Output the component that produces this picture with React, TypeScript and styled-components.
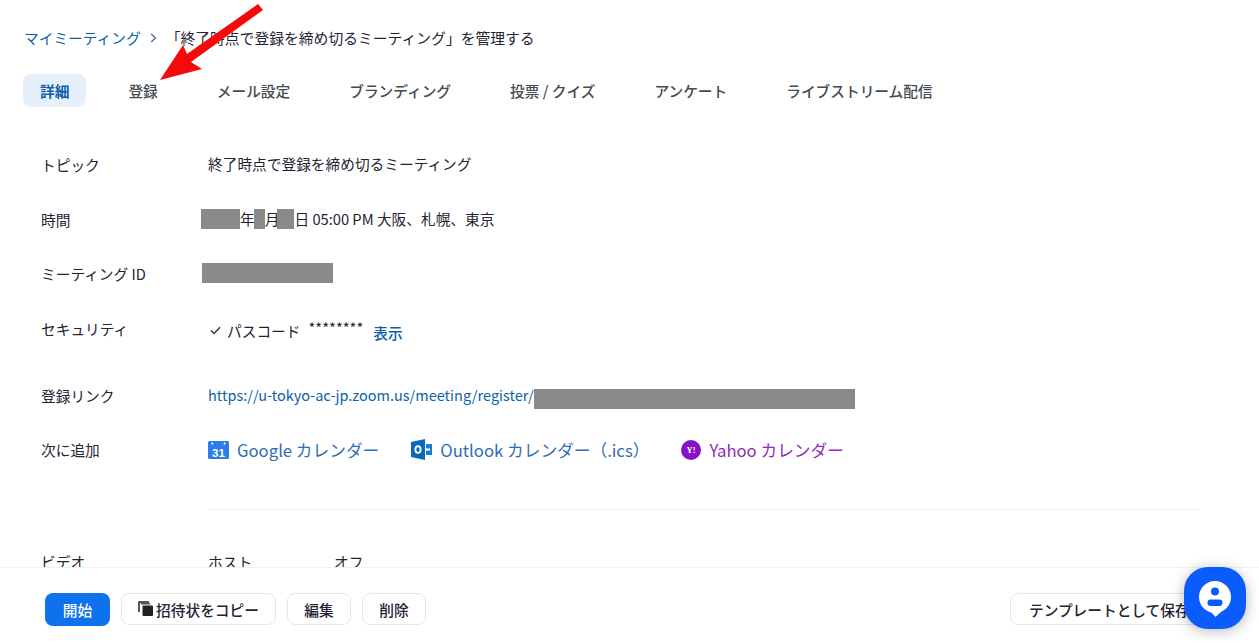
import React from 'react'
import styled, { createGlobalStyle } from 'styled-components'

const GlobalStyle = createGlobalStyle`
  html, body {
    margin: 0;
    padding: 0;
    background: #fff;
    overflow: hidden;
  }
  body {
    font-family: "Noto Sans CJK JP", "Noto Sans", sans-serif;
    color: #232333;
  }
`

const tabs = ['詳細', '登録', 'メール設定', 'ブランディング', '投票 / クイズ', 'アンケート', 'ライブストリーム配信']

const App: React.FC = () => {
  return (
    <Page>
      <GlobalStyle />
      <Content>
        <Breadcrumb>
          <CrumbLink>マイミーティング</CrumbLink>
          <CrumbSep>
            <svg width="7" height="10" viewBox="0 0 7 10">
              <path d="M1.2 1 L5.4 5 L1.2 9" fill="none" stroke="#3f6f9f" strokeWidth="1.3" />
            </svg>
          </CrumbSep>
          <CrumbTitle>「終了時点で登録を締め切るミーティング」を管理する</CrumbTitle>
        </Breadcrumb>
        <TabBar>
          {tabs.map((t, i) => (
            <Tab key={t} $active={i === 0}>{t}</Tab>
          ))}
        </TabBar>
        <Rows>
          <Row $h={55}>
            <Label>トピック</Label>
            <Value>終了時点で登録を締め切るミーティング</Value>
          </Row>
          <Row $h={55}>
            <Label>時間</Label>
            <DateValue>
              <Redact $w={39} />年<Redact $w={11} $nudge={-1} />月<Redact $w={17} $nudge={-2} />日 05:00 PM 大阪、札幌、東京
            </DateValue>
          </Row>
          <Row $h={54}>
            <Label>ミーティング ID</Label>
            <DateValue>
              <Redact $w={131} $nudge={1} />
            </DateValue>
          </Row>
          <Row $h={55} $after={12}>
            <Label>セキュリティ</Label>
            <SecurityValue>
              <Check width="11" height="9" viewBox="0 0 11 9">
                <path d="M1 4.5 L4 7.5 L10 1.2" fill="none" stroke="#333" strokeWidth="1.4" />
              </Check>
              パスコード<Stars>********</Stars><ShowLink>表示</ShowLink>
            </SecurityValue>
          </Row>
          <Row $h={55}>
            <Label>登録リンク</Label>
            <Value>
              <UrlLink>https://u-tokyo-ac-jp.zoom.us/meeting/register/</UrlLink>
              <Redact $w={321} $drop={4} />
            </Value>
          </Row>
          <Row $h={53}>
            <Label>次に追加</Label>
            <CalendarList>
              <CalendarLink>
                <svg width="21" height="20" viewBox="0 0 21 20">
                  <rect x="0" y="1" width="21" height="18" rx="1.5" fill="#2b7de9" />
                  <rect x="3.5" y="2.5" width="1.6" height="2" fill="#fff" />
                  <rect x="15.8" y="2.5" width="1.6" height="2" fill="#fff" />
                  <text x="10.5" y="16.5" textAnchor="middle" fontSize="11.5" fontWeight="700" fill="#fff" fontFamily="Liberation Sans, sans-serif">31</text>
                </svg>
                Google カレンダー
              </CalendarLink>
              <CalendarLink>
                <svg width="21" height="21" viewBox="0 0 21 21">
                  <path d="M0 3 L14 0 V21 L0 18 Z" fill="#0b68b8" />
                  <path d="M15 5 H21 V16 H15 V11.5 H19 V9.5 H15 Z" fill="#1a7ccc" />
                  <ellipse cx="7" cy="10.5" rx="2.6" ry="3.4" fill="none" stroke="#fff" strokeWidth="1.8" />
                </svg>
                Outlook カレンダー（.ics）
              </CalendarLink>
              <CalendarLink $purple>
                <svg width="20" height="20" viewBox="0 0 20 20">
                  <circle cx="10" cy="10" r="10" fill="#8a10c4" />
                  <text x="10" y="13" textAnchor="middle" fontSize="8.5" fontWeight="700" fill="#fff" fontFamily="Liberation Serif, serif">Y!</text>
                </svg>
                Yahoo カレンダー
              </CalendarLink>
            </CalendarList>
          </Row>
        </Rows>
        <Divider />
        <VideoRow>
          <Label>ビデオ</Label>
          <span>ホスト</span>
          <span>オフ</span>
        </VideoRow>
      </Content>
      <Footer>
        <PrimaryButton>開始</PrimaryButton>
        <CopyButton>
          <svg width="16" height="16" viewBox="0 0 16 16">
            <path d="M1 11 V1 H11" fill="none" stroke="#222" strokeWidth="1.5" />
            <path d="M2.8 2.8 H12" fill="none" stroke="#222" strokeWidth="1.2" />
            <rect x="4.5" y="4.5" width="10.5" height="10.5" rx="1" fill="#222" />
          </svg>
          招待状をコピー
        </CopyButton>
        <GhostButton>編集</GhostButton>
        <GhostButton>削除</GhostButton>
        <SaveButton>テンプレートとして保存</SaveButton>
      </Footer>
      <ChatBubble>
        <svg width="34" height="38" viewBox="0 0 34 38">
          <circle cx="17" cy="16" r="16" fill="#fff" />
          <path d="M12 30 L17.5 36 L26 28 Z" fill="#fff" />
          <circle cx="17" cy="10.5" r="4" fill="#0b5cff" />
          <rect x="9.5" y="18.5" width="15" height="6.5" rx="3.2" fill="#0b5cff" />
        </svg>
      </ChatBubble>
      <Arrow width="132" height="82" viewBox="0 0 132 82">
        <path d="M27 80 L50 45 L54 54 L125 4 L130 10 L58 62 L69 69 Z" fill="#f40a0a" />
      </Arrow>
    </Page>
  )
}

export default App

const Page = styled.div`
  position: relative;
  display: flex;
  flex-direction: column;
  width: 1259px;
  height: 643px;
  overflow: hidden;
  font-size: 14.7px;
  line-height: 20px;
`

const Content = styled.main`
  flex: 1;
  min-height: 0;
  overflow: hidden;
  padding: 28px 59px 0 23px;
`

const Breadcrumb = styled.nav`
  display: flex;
  align-items: center;
  height: 20px;
  padding-left: 1px;
  color: #232333;
`

const CrumbLink = styled.a`
  color: #0e5fa8;
`

const CrumbSep = styled.span`
  display: flex;
  width: 25px;
  padding-left: 9px;
  box-sizing: border-box;
`

const CrumbTitle = styled.span`
  font-size: 14.8px;
`

const TabBar = styled.div`
  display: flex;
  gap: 25px;
  margin-top: 26px;
`

const Tab = styled.a<{ $active?: boolean }>`
  display: flex;
  align-items: center;
  height: 33px;
  padding: 0 17px;
  border-radius: 8px;
  font-weight: ${(p) => (p.$active ? 700 : 500)};
  color: ${(p) => (p.$active ? '#0e5fa8' : '#444b53')};
  background: ${(p) => (p.$active ? '#e6f0fb' : 'transparent')};
`

const Rows = styled.div`
  margin-top: 30px;
`

const Row = styled.div<{ $h: number; $after?: number }>`
  display: grid;
  grid-template-columns: 185px 1fr;
  align-items: center;
  height: ${(p) => p.$h}px;
  margin-bottom: ${(p) => p.$after ?? 0}px;
`

const Label = styled.div`
  padding-left: 18px;
  color: #232333;
`

const Value = styled.div`
  display: flex;
  align-items: center;
  margin-top: -2px;
  white-space: pre;
  color: #232333;
`

const DateValue = styled(Value)`
  margin-left: -7px;
`

const SecurityValue = styled(Value)`
  margin-top: 4px;
`

const Redact = styled.span<{ $w: number; $nudge?: number; $drop?: number }>`
  display: inline-block;
  flex: none;
  width: ${(p) => p.$w}px;
  height: 20px;
  margin: ${(p) => p.$drop ?? 0}px 0 ${(p) => -(p.$drop ?? 0)}px ${(p) => p.$nudge ?? 0}px;
  background: #8a8a8a;
`

const Check = styled.svg`
  margin: 0 6px 0 2px;
`

const Stars = styled.span`
  margin: -6px 10px 0 8px;
`

const ShowLink = styled.a`
  margin-top: 4px;
  font-weight: 500;
  color: #0e5fa8;
`

const UrlLink = styled.a`
  font-size: 14.5px;
  color: #0e5fa8;
`

const CalendarList = styled.div`
  display: flex;
  align-items: center;
  gap: 32px;
`

const CalendarLink = styled.a<{ $purple?: boolean }>`
  display: flex;
  align-items: center;
  gap: 8px;
  font-size: 16.7px;
  color: ${(p) => (p.$purple ? '#8f2bb8' : '#2f6db5')};
`

const Divider = styled.hr`
  margin: 33px 0 0 185px;
  border: 0;
  border-top: 1px solid #eceef0;
`

const VideoRow = styled.div`
  display: grid;
  grid-template-columns: 185px 126px 1fr;
  margin-top: 42px;
`

const Footer = styled.footer`
  display: flex;
  align-items: center;
  gap: 11px;
  flex: none;
  height: 76px;
  box-sizing: border-box;
  padding: 7px 51px 0 45px;
  border-top: 1px solid #f0f1f2;
  background: #fff;
`

const PrimaryButton = styled.button`
  width: 65px;
  height: 33px;
  border: 0;
  border-radius: 8px;
  font: 500 14.7px "Noto Sans CJK JP", sans-serif;
  color: #fff;
  background: #0e72ed;
`

const GhostButton = styled.button`
  display: flex;
  align-items: center;
  justify-content: center;
  gap: 2px;
  width: 64px;
  height: 32px;
  padding: 0;
  border: 1px solid #e6e7e9;
  border-radius: 8px;
  font: 500 14.7px "Noto Sans CJK JP", sans-serif;
  color: #232333;
  background: #fff;
`

const CopyButton = styled(GhostButton)`
  width: 155px;
`

const SaveButton = styled(GhostButton)`
  width: 198px;
  margin-left: auto;
  justify-content: flex-start;
  padding-left: 18px;
  white-space: nowrap;
  overflow: hidden;
`

const ChatBubble = styled.div`
  position: absolute;
  left: 1184px;
  top: 567px;
  display: flex;
  justify-content: center;
  box-sizing: border-box;
  width: 62px;
  height: 62px;
  padding-top: 14px;
  border-radius: 24px;
  background: #0b5cff;
  box-shadow: 0 2px 14px rgba(0, 0, 0, 0.28);
`

const Arrow = styled.svg`
  position: absolute;
  left: 133px;
  top: 0;
`
